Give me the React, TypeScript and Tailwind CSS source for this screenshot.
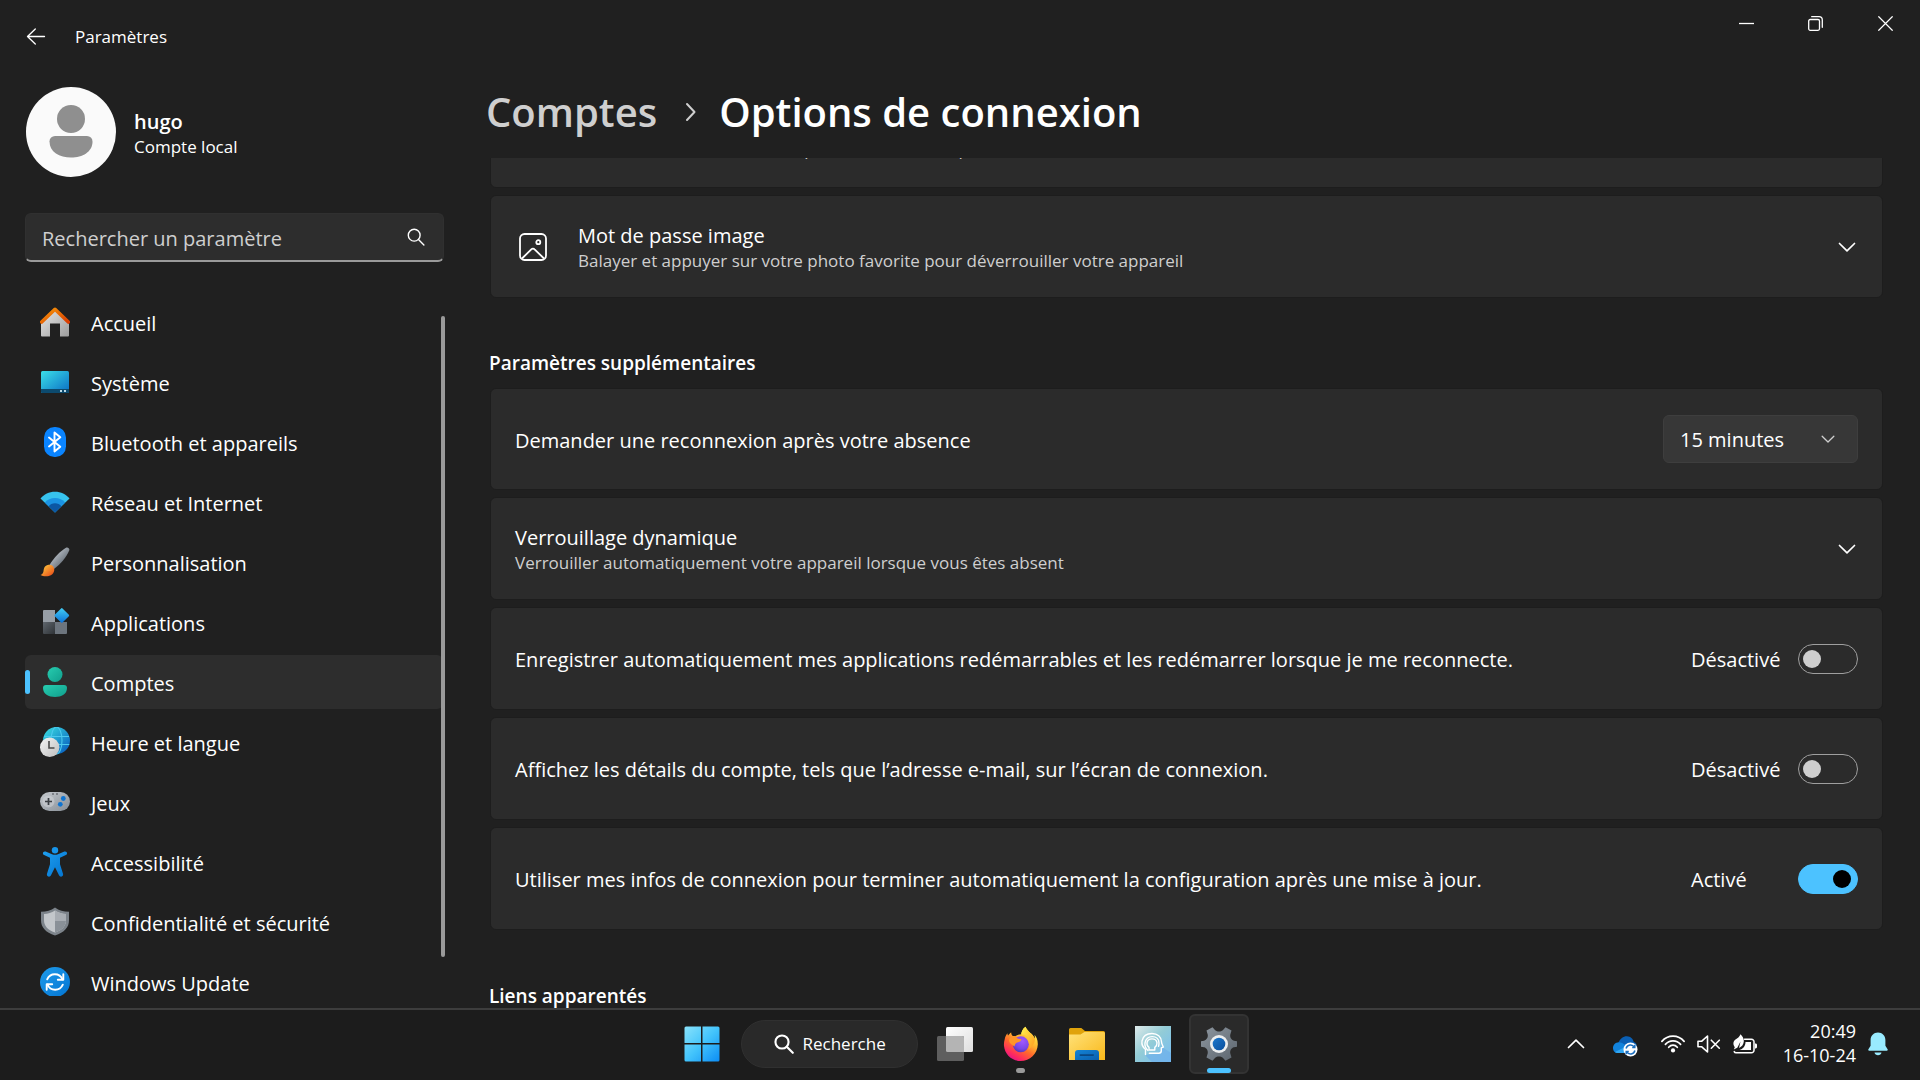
import { useState, type ReactNode } from "react";

/* ---------- Line icons ---------- */

function ChevronDown({ size = 18 }: { size?: number }) {
  return (
    <svg width={size} height={size} viewBox="0 0 18 18" fill="none" stroke="currentColor" strokeWidth="1.7" strokeLinecap="round" strokeLinejoin="round" aria-hidden="true">
      <path d="M1.500 5.500 9 12.800l7.500-7.300" />
    </svg>
  );
}

function SearchGlyph({ size, stroke }: { size: number; stroke: number }) {
  return (
    <svg width={size} height={size} viewBox="0 0 18 18" fill="none" stroke="currentColor" strokeWidth={stroke} strokeLinecap="round" aria-hidden="true">
      <circle cx="7.200" cy="7.200" r="5.900" />
      <path d="m11.500 11.500 5.400 5.400" />
    </svg>
  );
}

/* ---------- Sidebar icons ---------- */

function HomeIcon() {
  return (
    <svg width="30" height="30" viewBox="0 0 30 30" aria-hidden="true">
      <defs>
        <linearGradient id="homeWall" x1="0" y1="0" x2="1" y2="1">
          <stop offset="0" stopColor="#e8e8e8" />
          <stop offset="1" stopColor="#9d9d9d" />
        </linearGradient>
        <linearGradient id="homeRoof" x1="0" y1="0" x2="1" y2="1">
          <stop offset="0" stopColor="#f99a09" />
          <stop offset="1" stopColor="#d83b01" />
        </linearGradient>
      </defs>
      <path d="M1 14 15 2l14 12v14.500a1 1 0 0 1-1 1h-8V16.500h-10v13H2a1 1 0 0 1-1-1z" fill="url(#homeWall)" />
      <path d="M1.700 15 15 2.300 28.300 15" fill="none" stroke="url(#homeRoof)" strokeWidth="3.600" strokeLinecap="round" strokeLinejoin="round" />
    </svg>
  );
}

function SystemIcon() {
  return (
    <svg width="30" height="30" viewBox="0 0 30 30" aria-hidden="true">
      <defs>
        <linearGradient id="screen" x1="0" y1="0" x2="1" y2="1">
          <stop offset="0" stopColor="#3be0e8" />
          <stop offset="1" stopColor="#0a6cc4" />
        </linearGradient>
        <clipPath id="screenShape">
          <rect x="1" y="4" width="28" height="22" rx="1.500" />
        </clipPath>
      </defs>
      <g clipPath="url(#screenShape)">
        <rect x="1" y="4" width="28" height="22" fill="url(#screen)" />
        <rect x="1" y="22" width="28" height="4" fill="#0c4a6e" />
        <rect x="20" y="23" width="2" height="2" fill="#b9d8e6" />
        <rect x="24" y="23" width="2" height="2" fill="#b9d8e6" />
      </g>
    </svg>
  );
}

function BluetoothIcon() {
  return (
    <svg width="30" height="30" viewBox="0 0 30 30" aria-hidden="true">
      <rect x="4" y="0" width="22" height="30" rx="10.500" fill="#0a84ff" />
      <path d="m9 10.500 11.300 9.200-5.800 4.800v-19l5.800 4.800L9 19.500" fill="none" stroke="#fff" strokeWidth="1.900" strokeLinejoin="round" strokeLinecap="round" />
    </svg>
  );
}

function NetworkIcon() {
  return (
    <svg width="30" height="30" viewBox="0 0 30 30" aria-hidden="true">
      <path d="M15 25.500.5 11.500C4 7.300 9 4.800 15 4.800s11 2.500 14.500 6.700z" fill="#37c3ee" />
      <path d="M15 25.500 4.800 15.500c2.500-3 6-4.600 10.200-4.600s7.700 1.600 10.200 4.600z" fill="#1b93e3" />
      <path d="M15 25.500 8.600 19.300c1.500-1.900 3.800-3 6.400-3s4.900 1.100 6.400 3z" fill="#0b57a4" />
    </svg>
  );
}

function BrushIcon() {
  return (
    <svg width="30" height="30" viewBox="0 0 30 30" aria-hidden="true">
      <defs>
        <linearGradient id="handle" x1="0" y1="0" x2="1" y2="1">
          <stop offset="0.2" stopColor="#c2c8cf" />
          <stop offset="0.8" stopColor="#5b646e" />
        </linearGradient>
        <linearGradient id="bristle" x1="0" y1="0" x2="1" y2="1">
          <stop offset="0.1" stopColor="#ffc83d" />
          <stop offset="0.9" stopColor="#e8501a" />
        </linearGradient>
      </defs>
      <path d="M9.500 18C14 10.500 20 4.300 26 .7c1.900-1 4 .9 3.200 2.900C26.500 10 20.500 17.500 14 22z" fill="url(#handle)" />
      <path d="M8.500 17.800c3.400-.8 6.300 2.400 5.700 5.700-.8 4.200-4.500 5.900-8.300 5.800-2 0-4-.4-5.400-1.300C4 26.500 3.200 24.500 4 21.500c.6-2 2.300-3.300 4.500-3.700z" fill="url(#bristle)" />
    </svg>
  );
}

function AppsIcon() {
  return (
    <svg width="30" height="30" viewBox="0 0 30 30" aria-hidden="true">
      <defs>
        <linearGradient id="appDiamond" x1="0" y1="0" x2="1" y2="1">
          <stop offset="0" stopColor="#43cff5" />
          <stop offset="1" stopColor="#0b6fd6" />
        </linearGradient>
        <linearGradient id="appDark" x1="0" y1="0" x2="1" y2="1">
          <stop offset="0" stopColor="#5f666d" />
          <stop offset="1" stopColor="#2f3337" />
        </linearGradient>
      </defs>
      <path d="M4 3h11v12H3V4a1 1 0 0 1 1-1z" fill="#979ea6" />
      <path d="M3 15h12v12H4a1 1 0 0 1-1-1z" fill="url(#appDark)" />
      <path d="M15 15h12v11a1 1 0 0 1-1 1H15z" fill="#6d757e" />
      <rect x="16.300" y="3" width="11" height="11" rx="1" transform="rotate(45 21.800 8.500)" fill="url(#appDiamond)" />
    </svg>
  );
}

function AccountsIcon() {
  return (
    <svg width="30" height="30" viewBox="0 0 30 30" aria-hidden="true">
      <defs>
        <linearGradient id="person" x1="0" y1="0" x2="1" y2="1">
          <stop offset="0" stopColor="#27cdb0" />
          <stop offset="1" stopColor="#109e8c" />
        </linearGradient>
      </defs>
      <circle cx="15" cy="7.500" r="7.500" fill="url(#person)" />
      <path d="M6 18h18a3 3 0 0 1 3 3c0 6-5.500 9-12 9S3 27 3 21a3 3 0 0 1 3-3z" fill="url(#person)" />
    </svg>
  );
}

function TimeIcon() {
  return (
    <svg width="30" height="30" viewBox="0 0 30 30" aria-hidden="true">
      <defs>
        <linearGradient id="globe" x1="0" y1="0" x2="1" y2="1">
          <stop offset="0.1" stopColor="#35d4dd" />
          <stop offset="0.9" stopColor="#0a62c2" />
        </linearGradient>
        <linearGradient id="clock" x1="0" y1="0" x2="1" y2="1">
          <stop offset="0" stopColor="#f5f5f5" />
          <stop offset="1" stopColor="#bdbdbd" />
        </linearGradient>
      </defs>
      <circle cx="16.500" cy="13.500" r="13.500" fill="url(#globe)" />
      <g fill="none" stroke="#4cc8ee" strokeWidth="1.100">
        <ellipse cx="16.500" cy="13.500" rx="5.500" ry="13.500" />
        <path d="M4 9.500h25M4 17.500h25.300" />
      </g>
      <circle cx="9.700" cy="20.300" r="9.700" fill="url(#clock)" />
      <path d="M9 14v7h5.500" fill="none" stroke="#4a4a4a" strokeWidth="1.600" />
    </svg>
  );
}

function GamesIcon() {
  return (
    <svg width="30" height="30" viewBox="0 0 30 30" aria-hidden="true">
      <defs>
        <linearGradient id="pad" x1="0" y1="0" x2="1" y2="1">
          <stop offset="0" stopColor="#c5c9ce" />
          <stop offset="1" stopColor="#868d95" />
        </linearGradient>
      </defs>
      <rect x="0" y="5" width="30" height="19" rx="9.500" fill="url(#pad)" />
      <circle cx="8.500" cy="14.500" r="6" fill="#d3d6da" opacity="0.5" />
      <path d="M8.500 11v7M5 14.500h7" stroke="#3b3f44" strokeWidth="1.700" />
      <circle cx="23.300" cy="11.500" r="2.400" fill="#0f74d1" />
      <circle cx="20.300" cy="17.300" r="2.400" fill="#0f74d1" />
      <circle cx="13" cy="7" r="0.800" fill="#3b3f44" />
      <circle cx="17" cy="7" r="0.800" fill="#3b3f44" />
    </svg>
  );
}

function AccessibilityIcon() {
  return (
    <svg width="30" height="30" viewBox="0 0 30 30" aria-hidden="true">
      <defs>
        <linearGradient id="figure" x1="0" y1="0" x2="1" y2="1">
          <stop offset="0" stopColor="#1fa0f0" />
          <stop offset="1" stopColor="#0272cf" />
        </linearGradient>
      </defs>
      <circle cx="15" cy="3.300" r="3.200" fill="#1795ea" />
      <path d="M5.600 4.500 12 7.200c2 .8 4 .8 6 0l6.400-2.700c2.600-.8 3.700 2.500 1.500 3.600L20 10.800v6.500l3 9.500c.8 2.800-2.900 4-4 1.500l-3.600-7.400c-.2-.4-.6-.4-.8 0L11 28.300c-1.100 2.500-4.800 1.300-4-1.500l3-9.500v-6.500L4.100 8.100C1.900 7 3 3.700 5.600 4.500z" fill="url(#figure)" />
    </svg>
  );
}

function ShieldIcon() {
  return (
    <svg width="30" height="30" viewBox="0 0 30 30" aria-hidden="true">
      <path d="M15 .5c4 3 8.500 4.200 14 4.200V13c0 7.500-4.500 12.300-14 15.500C5.500 25.300 1 20.500 1 13V4.700C6.500 4.700 11 3.500 15 .5z" fill="#7d848b" />
      <path d="M15 3.500c3.500 2.300 7 3.300 11 3.500v6c0 6-3.500 9.700-11 12.500C7.500 22.700 4 19 4 13V7c4-.2 7.500-1.200 11-3.500z" fill="#c3c7cb" />
      <path d="M15 3.500c3.500 2.300 7 3.300 11 3.500v6c0 6-3.500 9.700-11 12.500z" fill="#a8adb3" />
      <path d="M15 14h10.900c-.4 5.500-4 9-10.900 11.500z" fill="#8a9198" />
    </svg>
  );
}

function UpdateIcon() {
  return (
    <svg width="30" height="30" viewBox="0 0 30 30" aria-hidden="true">
      <defs>
        <linearGradient id="updateDisc" x1="0" y1="0" x2="1" y2="1">
          <stop offset="0" stopColor="#1f9bea" />
          <stop offset="1" stopColor="#0375d3" />
        </linearGradient>
      </defs>
      <circle cx="15" cy="15" r="15" fill="url(#updateDisc)" />
      <g fill="none" stroke="#fff" strokeWidth="1.900" strokeLinecap="round" strokeLinejoin="round">
        <path d="M7.200 12.300A8.300 8.300 0 0 1 22.500 12.300" />
        <path d="M23.300 7.300v5.500h-5.500" />
        <path d="M22.800 17.700A8.300 8.300 0 0 1 7.500 17.700" />
        <path d="M6.700 22.700v-5.500h5.500" />
      </g>
    </svg>
  );
}

/* ---------- Taskbar icons ---------- */

function StartIcon() {
  return (
    <svg width="36" height="36" viewBox="0 0 36 36" aria-hidden="true">
      <defs>
        <linearGradient id="winLogo" x1="0" y1="0" x2="36" y2="36" gradientUnits="userSpaceOnUse">
          <stop offset="0" stopColor="#8be3fb" />
          <stop offset="0.5" stopColor="#43c4fc" />
          <stop offset="1" stopColor="#0a8bf5" />
        </linearGradient>
      </defs>
      <path d="M2 .5h15v16.500H.5V2A1.500 1.500 0 0 1 2 .5zM18.500.5H34A1.500 1.500 0 0 1 35.500 2v15h-17zM.5 18.500H17v17H2A1.500 1.500 0 0 1 .5 34zM18.500 18.500h17V34a1.500 1.500 0 0 1-1.500 1.500H18.500z" fill="url(#winLogo)" />
    </svg>
  );
}

function TaskViewIcon() {
  return (
    <svg width="36" height="36" viewBox="0 0 36 36" aria-hidden="true">
      <defs>
        <linearGradient id="sheet" x1="0" y1="0" x2="1" y2="1">
          <stop offset="0" stopColor="#ffffff" />
          <stop offset="1" stopColor="#dedede" />
        </linearGradient>
      </defs>
      <rect x="9" y="1" width="27" height="25" rx="1.500" fill="url(#sheet)" />
      <rect x="0" y="10" width="27" height="25" rx="1.500" fill="#5e5e5e" />
      <path d="M9 10h16.500a1.500 1.500 0 0 1 1.500 1.500V26H10.500A1.500 1.500 0 0 1 9 24.500z" fill="#b4b4b4" />
    </svg>
  );
}

function FirefoxIcon() {
  return (
    <svg width="36" height="36" viewBox="0 0 36 36" aria-hidden="true">
      <defs>
        <linearGradient id="foxBody" x1="0.85" y1="0.1" x2="0.3" y2="1">
          <stop offset="0" stopColor="#fff44f" />
          <stop offset="0.35" stopColor="#ffb52e" />
          <stop offset="0.6" stopColor="#ff6a2b" />
          <stop offset="0.85" stopColor="#ff2a5f" />
          <stop offset="1" stopColor="#e31587" />
        </linearGradient>
        <radialGradient id="foxGlobe" cx="0.6" cy="0.3" r="0.8">
          <stop offset="0" stopColor="#a259ff" />
          <stop offset="0.6" stopColor="#7a47e8" />
          <stop offset="1" stopColor="#4a32a8" />
        </radialGradient>
        <linearGradient id="foxTail" x1="0" y1="0" x2="1" y2="1">
          <stop offset="0" stopColor="#fff44f" />
          <stop offset="1" stopColor="#ff9a1f" />
        </linearGradient>
      </defs>
      <path d="M22.500.8c-2.700 1.800-4 4.700-4.300 7.500-2.800.2-4.600 1-6 1.900-.9-.2-1.800-.2-2.300-.1-1-.7-1.600-1.900-1.700-3.700-1.300.7-2.400 2-3.100 3.100-.4-.2-.6-1.300-.6-2.200-1.400 1.600-2.400 3.600-2.800 6C1 15.600.8 18 1 20c.9 8.600 8 15 16.500 15C27 35 34.500 27.700 34.800 18.500c.1-4.300-1.300-7.700-3.300-9.700.3 1.500.4 2.700.3 3.900C30 7.500 25 6.500 22.500.8z" fill="url(#foxBody)" />
      <circle cx="17.800" cy="18.300" r="8" fill="url(#foxGlobe)" />
      <path d="M22.500.8c-2.700 1.800-4 4.700-4.300 7.500 5.200.3 9 3.700 9 9.200 0 2.400-1 4.700-2 5.900 4.500-2.500 7-7 6.600-10.700C30 7.500 25 6.500 22.500.8z" fill="url(#foxTail)" />
      <path d="M6 13.500c1.500-2.200 4-3.200 6.200-3.300.8 1.500 2.800 2.700 5.300 2.900.8.100.9.500.8.800-.6 1.800-4 2.300-5 3-1.300.9-1.600 2.300-1.800 3.700-2.500-2.500-5.500-2.500-5.500-7.100z" fill="#ff9528" />
    </svg>
  );
}

function ExplorerIcon() {
  return (
    <svg width="36" height="36" viewBox="0 0 36 36" aria-hidden="true">
      <defs>
        <linearGradient id="folder" x1="0" y1="0" x2="1" y2="1">
          <stop offset="0" stopColor="#ffe27a" />
          <stop offset="1" stopColor="#f9b81a" />
        </linearGradient>
        <linearGradient id="folderTray" x1="0" y1="0" x2="1" y2="1">
          <stop offset="0" stopColor="#1484d6" />
          <stop offset="1" stopColor="#0a5fae" />
        </linearGradient>
      </defs>
      <path d="M1.500 2h10.800l3.700 3H34.500A1.500 1.500 0 0 1 36 6.500V14H0V3.500A1.500 1.500 0 0 1 1.500 2z" fill="#e0a30c" />
      <path d="M0 8.500h11.500L15.500 6H34.500A1.500 1.500 0 0 1 36 7.500V34H0z" fill="url(#folder)" />
      <path d="M9 24h18a3 3 0 0 1 3 3v7H6v-7a3 3 0 0 1 3-3z" fill="url(#folderTray)" />
      <rect x="10.500" y="28.300" width="14.500" height="1.600" rx="0.800" fill="#0a4782" />
    </svg>
  );
}

function HeadAppIcon() {
  return (
    <svg width="36" height="36" viewBox="0 0 36 36" aria-hidden="true">
      <defs>
        <linearGradient id="headTile" x1="0" y1="0" x2="1" y2="1">
          <stop offset="0" stopColor="#dfeaea" />
          <stop offset="0.45" stopColor="#93ccd6" />
          <stop offset="1" stopColor="#74bcf5" />
        </linearGradient>
      </defs>
      <rect width="36" height="36" fill="url(#headTile)" />
      <path d="M10 29 17 36h19V27l-9-6-1 6z" fill="#6fb1ea" opacity="0.7" />
      <g fill="none" stroke="#fff" strokeWidth="1.400" strokeLinejoin="round" strokeLinecap="round">
        <path d="M10.500 28.500V23.500C7.500 21 6.500 18 7 15 8 10 12 7.500 17 7.500c5.500 0 9.300 3.500 9.500 8.300 0 1.200.3 2 .8 3l1 2.200-2 .8v3c0 1.700-.9 2.500-2.500 2.500h-9.500" />
        <path d="M13 24.500c-2.200-2-3.500-4.700-3-7.600.8-4 3.600-6.300 7.200-6.300 4 0 6.800 2.600 6.800 6.300 0 1.500-.2 2.500-.5 3.500" />
        <path d="M14 24v-2.600c-1.500-1-2.200-2.700-2-4.500.4-2.500 2.400-4 5-4s4.700 1.500 5 4c.1 1.800-.7 3.500-2.200 4.500V24z" />
      </g>
    </svg>
  );
}

function SettingsGearIcon() {
  return (
    <svg width="36" height="36" viewBox="0 0 36 36" aria-hidden="true">
      <defs>
        <linearGradient id="gear" x1="0" y1="0" x2="1" y2="1">
          <stop offset="0" stopColor="#8d969f" />
          <stop offset="1" stopColor="#5c656e" />
        </linearGradient>
        <linearGradient id="gearHub" x1="0" y1="0" x2="1" y2="1">
          <stop offset="0" stopColor="#1b77cc" />
          <stop offset="1" stopColor="#0a4e9c" />
        </linearGradient>
      </defs>
      <path d="M11.500 1.200 14.200 4.200c2 1.800 5.600 1.800 7.600 0l2.700-3 6 3.400-1.200 4c-.6 2.600 1 5.400 3.600 6.100L36 15.300v5.400l-3.100.6c-2.600.7-4.200 3.500-3.600 6.100l1.200 4-6 3.400-2.700-3c-2-1.800-5.600-1.800-7.600 0l-2.700 3-6-3.400 1.200-4c.6-2.600-1-5.400-3.600-6.100L0 20.700v-5.400l3.100-.6c2.600-.7 4.200-3.500 3.600-6.100l-1.200-4z" fill="url(#gear)" />
      <circle cx="18" cy="18" r="9" fill="#eceeef" />
      <circle cx="18" cy="18" r="6.300" fill="url(#gearHub)" />
    </svg>
  );
}

function OneDriveIcon() {
  return (
    <svg width="26" height="22" viewBox="0 0 26 22" aria-hidden="true">
      <path d="M6.500 7.500C8 3.700 11.500 1 15 1.200c3.500.2 6 2.600 6.800 5.800 1.500.3 3 2 3 4L13 15z" fill="#0a5fb4" />
      <path d="M1 13.500C.8 10 3.500 7.200 6.800 7.200c3.700 0 6.200 3 9.700 5.300L9 18H5.500C3 18 1.100 16 1 13.500z" fill="#1283dc" />
      <path d="M3 17 13 12l5 6H5.500C4.500 18 3.700 17.600 3 17z" fill="#30a6f2" />
      <circle cx="18.500" cy="14.500" r="7" fill="#fff" />
      <g fill="none" stroke="#1b6fc0" strokeWidth="1.500">
        <path d="M14.100 13.500a4.500 4.500 0 0 1 8.300-1.200M22.900 15.500a4.500 4.500 0 0 1-8.300 1.200" />
        <path d="M22.800 9.800v2.700h-2.600M14.200 19.200v-2.700h2.600" />
      </g>
    </svg>
  );
}

function WifiIcon() {
  return (
    <svg width="24" height="18" viewBox="0 0 24 18" fill="none" stroke="#fff" strokeWidth="1.700" strokeLinecap="round" aria-hidden="true">
      <path d="M.9 6.400C3.700 3.100 7.600 1.200 12 1.200s8.300 1.900 11.100 5.200" />
      <path d="M4.400 9.400C6.300 7.200 9 5.900 12 5.900s5.700 1.300 7.600 3.500" />
      <path d="M7.700 12.300C8.800 11 10.300 10.200 12 10.200s3.200.8 4.300 2.100" />
      <circle cx="12" cy="15.400" r="2.100" fill="#fff" stroke="none" />
    </svg>
  );
}

function MutedIcon() {
  return (
    <svg width="24" height="18" viewBox="0 0 24 18" fill="none" stroke="#fff" strokeWidth="1.600" strokeLinecap="round" strokeLinejoin="round" aria-hidden="true">
      <path d="M1 6.200h3.800L10.500 1v16l-5.700-5.200H1z" />
      <path d="m14.300 5.200 8 8M22.300 5.200l-8 8" />
    </svg>
  );
}

function BatteryIcon() {
  return (
    <svg width="24" height="21" viewBox="0 0 24 21" aria-hidden="true">
      <path d="M11.500 5.200h7a2.500 2.500 0 0 1 2.500 2.500v8.600a2.500 2.500 0 0 1-2.500 2.500H3a2 2 0 0 1-1.800-1.200" fill="none" stroke="#fff" strokeWidth="1.500" strokeLinecap="round" />
      <path d="M22 9.500h.6c.8 0 1.400.6 1.400 1.400v2.200c0 .8-.6 1.400-1.400 1.400H22z" fill="#fff" />
      <path d="M12.500 8H18v8H6.500c3.500-1 6-4 6-8z" fill="#fff" />
      <path d="M7.500.3c2 2 3.500 4.500 3.300 7.200-.2 3-2 5.200-4.800 6.500L7.500 7.500 4.300 13.800.8 15.500l1-2.300C-.5 10 .3 7 2.500 5.500 4.500 4.200 6.500 3 7.500.3z" fill="#fff" />
    </svg>
  );
}

function BellIcon() {
  return (
    <svg width="20" height="24" viewBox="0 0 20 24" fill="#99ebff" aria-hidden="true">
      <path d="M10 .5c4.300 0 7.400 3.300 7.400 7.500v5.700l2.200 3.600c.4.700.1 1.400-.8 1.400H1.200c-.9 0-1.200-.7-.8-1.400l2.200-3.600V8C2.600 3.800 5.700.5 10 .5z" />
      <path d="M6.500 20.500h7c-.3 1.700-1.700 2.800-3.500 2.800s-3.200-1.100-3.500-2.800z" />
    </svg>
  );
}

/* ---------- Building blocks ---------- */

const navItems: { label: string; icon: ReactNode }[] = [
  { label: "Accueil", icon: <HomeIcon /> },
  { label: "Système", icon: <SystemIcon /> },
  { label: "Bluetooth et appareils", icon: <BluetoothIcon /> },
  { label: "Réseau et Internet", icon: <NetworkIcon /> },
  { label: "Personnalisation", icon: <BrushIcon /> },
  { label: "Applications", icon: <AppsIcon /> },
  { label: "Comptes", icon: <AccountsIcon /> },
  { label: "Heure et langue", icon: <TimeIcon /> },
  { label: "Jeux", icon: <GamesIcon /> },
  { label: "Accessibilité", icon: <AccessibilityIcon /> },
  { label: "Confidentialité et sécurité", icon: <ShieldIcon /> },
  { label: "Windows Update", icon: <UpdateIcon /> },
];

function NavLink({ label, icon, selected }: { label: string; icon: ReactNode; selected: boolean }) {
  return (
    <li>
      <a
        href="#"
        aria-current={selected ? "page" : undefined}
        className={`relative flex h-[54px] items-center gap-[21px] rounded-md pl-[15px] text-[20px] leading-7 ${selected ? "bg-[#2d2d2d]" : ""}`}
      >
        {selected && <span className="absolute left-0 top-[15px] h-6 w-[5px] rounded-full bg-[#4cc2ff]" />}
        {icon}
        <span className="pt-1">{label}</span>
      </a>
    </li>
  );
}

const cardClass = "flex w-full shrink-0 items-center rounded-md border border-[#1d1d1d] bg-[#2b2b2b] text-left";

function ExpanderCard({ title, detail, icon }: { title: string; detail: string; icon?: ReactNode }) {
  return (
    <button type="button" aria-expanded="false" className={`${cardClass} min-h-[103px] pl-6 pr-[26px]`}>
      {icon && <span className="flex w-[63px] pl-1">{icon}</span>}
      <span className="flex flex-1 flex-col pt-[2px]">
        <span className="text-[20px] leading-[26px] text-white">{title}</span>
        <span className="text-[17px] leading-6 text-[#cfcfcf]">{detail}</span>
      </span>
      <ChevronDown />
    </button>
  );
}

function ToggleCard({ id, label, initial }: { id: string; label: string; initial: boolean }) {
  const [on, setOn] = useState(initial);
  return (
    <div className={`${cardClass} min-h-[103px] px-6`}>
      <label htmlFor={id} className="flex-1 pt-[3px] text-[20px] leading-7">
        {label}
      </label>
      <span className="w-[107px] pt-[3px] text-[20px] leading-7">{on ? "Activé" : "Désactivé"}</span>
      <input
        id={id}
        type="checkbox"
        role="switch"
        checked={on}
        onChange={(e) => setOn(e.target.checked)}
        className="flex h-[30px] w-[60px] appearance-none items-center rounded-full border border-[#9f9f9f] px-1 before:size-[18px] before:rounded-full before:bg-[#cecece] checked:justify-end checked:border-[#4cc2ff] checked:bg-[#4cc2ff] checked:px-[6px] checked:before:bg-black"
      />
    </div>
  );
}

function ImageIcon() {
  return (
    <svg width="28" height="28" viewBox="0 0 28 28" fill="none" stroke="#fff" strokeWidth="1.800" aria-hidden="true">
      <rect x="1" y="1" width="26" height="26" rx="4.500" />
      <circle cx="19.300" cy="9.200" r="2" />
      <path d="m3 25.500 9.300-9.200a2.300 2.300 0 0 1 3.300 0L25 25.500" />
    </svg>
  );
}

function Sidebar() {
  return (
    <aside className="flex min-h-0 w-[445px] shrink-0 flex-col pl-[25px]">
      <button type="button" className="mt-[14px] flex items-center gap-[18px] pl-px text-left">
        <svg width="90" height="90" viewBox="0 0 90 90" aria-hidden="true">
          <circle cx="45" cy="45" r="45" fill="#fafafa" />
          <circle cx="45" cy="32" r="14" fill="#8f8f8f" />
          <path d="M29 49h32a5.500 5.500 0 0 1 5.500 5.500C66.500 65 56.500 70.500 45 70.500S23.500 65 23.500 54.500A5.500 5.500 0 0 1 29 49z" fill="#8f8f8f" />
        </svg>
        <span className="flex flex-col pt-1">
          <span className="text-[20px] font-semibold leading-[26px]">hugo</span>
          <span className="text-[17px] leading-6">Compte local</span>
        </span>
      </button>

      <label className="mr-px mt-9 flex h-[49px] shrink-0 items-center rounded-md border border-b-2 border-[#303030] border-b-[#9a9a9a] bg-[#2d2d2d] pl-4 pr-[18px]">
        <input
          type="search"
          aria-label="Rechercher un paramètre"
          placeholder="Rechercher un paramètre"
          className="min-w-0 flex-1 bg-transparent pt-[3px] text-[20px] leading-7 text-white outline-none placeholder:text-[#cfcfcf]"
        />
        <SearchGlyph size={18} stroke={1.4} />
      </label>

      <div className="relative mb-3 mt-[33px] min-h-0 flex-1">
        <nav className="h-full overflow-hidden pr-[2px]">
          <ul className="flex flex-col gap-[6px]">
            {navItems.map((item) => (
              <NavLink key={item.label} {...item} selected={item.label === "Comptes"} />
            ))}
          </ul>
        </nav>
        <span className="absolute bottom-[39px] right-0 top-[21px] w-1 rounded-full bg-[#9a9a9a]" />
      </div>
    </aside>
  );
}

function SettingsWindow() {
  return (
    <div className="flex min-h-0 flex-1 flex-col">
      <header className="flex h-[73px] shrink-0 items-start justify-between">
        <div className="flex h-full items-center gap-[29px] pl-[26px]">
          <button type="button" aria-label="Retour">
            <svg width="20" height="18" viewBox="0 0 20 18" fill="none" stroke="#fff" strokeWidth="1.300" strokeLinecap="round" strokeLinejoin="round" aria-hidden="true">
              <path d="M18.500 8.500H1.500M9.300 1 1.500 8.500l7.800 7.500" />
            </svg>
          </button>
          <span className="text-[17px] leading-6">Paramètres</span>
        </div>
        <div className="flex">
          <button type="button" aria-label="Réduire" className="flex h-[47px] w-[69px] items-center justify-center">
            <svg width="15" height="15" viewBox="0 0 15 15" stroke="#fff" strokeWidth="1.300" aria-hidden="true">
              <path d="M0 7.500h15" />
            </svg>
          </button>
          <button type="button" aria-label="Restaurer" className="flex h-[47px] w-[69px] items-center justify-center">
            <svg width="15" height="15" viewBox="0 0 15 15" fill="none" stroke="#fff" strokeWidth="1.300" aria-hidden="true">
              <rect x="0.700" y="3.500" width="10.800" height="10.800" rx="1.500" />
              <path d="M3.700.7h7.300a3.300 3.300 0 0 1 3.300 3.300v7.300" strokeLinecap="round" />
            </svg>
          </button>
          <button type="button" aria-label="Fermer" className="flex h-[47px] w-[70px] items-center justify-center">
            <svg width="15" height="15" viewBox="0 0 16 16" stroke="#fff" strokeWidth="1.300" strokeLinecap="round" aria-hidden="true">
              <path d="m.8.800 14.400 14.400M15.200.8.800 15.200" />
            </svg>
          </button>
        </div>
      </header>

      <div className="flex min-h-0 flex-1">
        <Sidebar />
        <main className="flex min-h-0 min-w-0 flex-1 flex-col pl-[41px] pr-[37px]">
          <h1 className="flex h-[85px] shrink-0 items-center pb-[7px] text-[40px] font-semibold leading-[54px]">
            <a href="#" className="text-[#cfcfcf]">
              Comptes
            </a>
            <svg width="62" height="20" viewBox="0 0 62 20" fill="none" stroke="#cfcfcf" strokeWidth="2" strokeLinecap="round" strokeLinejoin="round" aria-hidden="true">
              <path d="m30 2 7.500 8L30 18" />
            </svg>
            <span>Options de connexion</span>
          </h1>

          <div className="flex min-h-0 flex-1 flex-col overflow-hidden pl-[4px]">
            <div className="-mt-[22px] flex flex-col gap-[7px]">
              <div className={`${cardClass} h-[52px] items-start pl-[87px]`}>
                <span className="text-[17px] leading-6 text-[#cfcfcf]">Se connecter avec le mot de passe de votre compte</span>
              </div>
              <ExpanderCard icon={<ImageIcon />} title="Mot de passe image" detail="Balayer et appuyer sur votre photo favorite pour déverrouiller votre appareil" />
            </div>

            <h2 className="-ml-px mb-[11px] mt-[51px] text-[19px] font-semibold leading-7">Paramètres supplémentaires</h2>
            <div className="flex flex-col gap-[7px]">
              <div className={`${cardClass} min-h-[102px] px-6`}>
                <label htmlFor="reconnect" className="flex-1 pt-[3px] text-[20px] leading-7">
                  Demander une reconnexion après votre absence
                </label>
                <span className="relative flex items-center">
                  <select
                    id="reconnect"
                    defaultValue="15"
                    className="h-12 w-[195px] appearance-none rounded-md border border-[#3e3e3e] bg-[#373737] pl-4 pt-[2px] text-[20px] leading-7 text-white"
                  >
                    <option value="15">15 minutes</option>
                    <option value="0">Jamais</option>
                  </select>
                  <span className="pointer-events-none absolute right-[23px] text-[#cfcfcf]">
                    <ChevronDown size={14} />
                  </span>
                </span>
              </div>
              <ExpanderCard title="Verrouillage dynamique" detail="Verrouiller automatiquement votre appareil lorsque vous êtes absent" />
              <ToggleCard id="restart-apps" initial={false} label="Enregistrer automatiquement mes applications redémarrables et les redémarrer lorsque je me reconnecte." />
              <ToggleCard id="account-details" initial={false} label="Affichez les détails du compte, tels que l’adresse e-mail, sur l’écran de connexion." />
              <ToggleCard id="sign-in-info" initial={true} label="Utiliser mes infos de connexion pour terminer automatiquement la configuration après une mise à jour." />
            </div>

            <h2 className="-ml-px mt-[52px] text-[19px] font-semibold leading-7">Liens apparentés</h2>
          </div>
        </main>
      </div>
    </div>
  );
}

function TaskButton({ label, children }: { label: string; children: ReactNode }) {
  return (
    <button type="button" aria-label={label} className="relative flex size-[60px] items-center justify-center">
      {children}
    </button>
  );
}

function Taskbar() {
  return (
    <footer className="grid h-[72px] shrink-0 grid-cols-[1fr_auto_1fr] items-center border-t-2 border-[#3d3d3d] bg-[#1c1c1c] pb-[2px]">
      <span />
      <div className="flex items-center gap-[6px]">
        <TaskButton label="Démarrer">
          <StartIcon />
        </TaskButton>
        <button type="button" className="ml-[3px] mr-px flex h-12 w-[177px] items-center gap-[9px] rounded-full border border-[#303030] bg-[#292929] pl-8 text-[17px] leading-6">
          <SearchGlyph size={20} stroke={1.9} />
          Recherche
        </button>
        <TaskButton label="Affichage des tâches">
          <TaskViewIcon />
        </TaskButton>
        <TaskButton label="Firefox">
          <FirefoxIcon />
          <span className="absolute bottom-px h-[5px] w-[9px] rounded-full bg-[#9a9a9a]" />
        </TaskButton>
        <TaskButton label="Explorateur de fichiers">
          <ExplorerIcon />
        </TaskButton>
        <TaskButton label="Application">
          <HeadAppIcon />
        </TaskButton>
        <button type="button" aria-label="Paramètres" className="relative flex size-[60px] items-center justify-center rounded-md border-2 border-[#333333] bg-[#2a2a2a]">
          <SettingsGearIcon />
          <span className="absolute -bottom-px h-[5px] w-6 rounded-full bg-[#4cc2ff]" />
        </button>
      </div>

      <div className="flex items-center justify-end pr-8">
        <button type="button" aria-label="Afficher les icônes cachées" className="mr-[27px] rotate-180">
          <ChevronDown />
        </button>
        <button type="button" aria-label="OneDrive" className="mr-[23px] pt-1">
          <OneDriveIcon />
        </button>
        <button type="button" aria-label="Réseau, son et batterie" className="mr-[26px] flex items-center gap-3">
          <WifiIcon />
          <MutedIcon />
          <BatteryIcon />
        </button>
        <button type="button" className="mr-3 pb-[3px] text-right text-[18px] leading-6">
          20:49
          <br />
          16-10-24
        </button>
        <button type="button" aria-label="Notifications">
          <BellIcon />
        </button>
      </div>
    </footer>
  );
}

export default function App() {
  return (
    <div className="flex h-screen flex-col overflow-hidden bg-[#202020] font-['Open_Sans','Noto_Sans',sans-serif] text-white">
      <SettingsWindow />
      <Taskbar />
    </div>
  );
}
